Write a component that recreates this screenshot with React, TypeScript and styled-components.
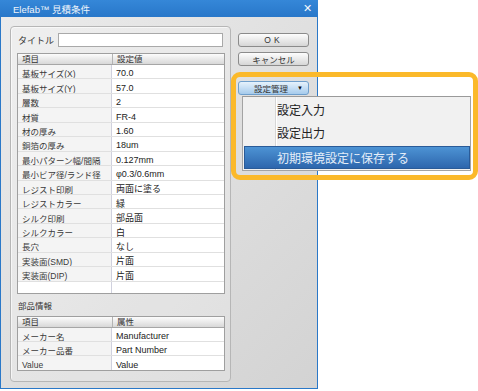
import styled, { createGlobalStyle } from "styled-components";

const FONT = `"Liberation Sans", "Noto Sans CJK JP", sans-serif`;

const GlobalStyle = createGlobalStyle`
  html, body {
    margin: 0;
    padding: 0;
    background: #ffffff;
  }
  body {
    font-family: ${FONT};
    color: #222;
  }
`;

const Stage = styled.div`
  position: relative;
  width: 478px;
  height: 391px;
  overflow: hidden;
`;

const Window = styled.div`
  width: 318px;
  height: 389px;
  box-sizing: border-box;
  border: 1px solid #2a78c8;
  border-top: none;
  display: flex;
  flex-direction: column;
`;

const TitleBar = styled.div`
  height: 17px;
  flex: none;
  margin: 0 -1px;
  background: linear-gradient(#3587d8, #2877c9);
  display: flex;
  align-items: center;
  justify-content: space-between;
  padding: 0 6px 0 13px;
  color: #eef4fb;
  font-size: 9.5px;
`;

const CloseMark = styled.span`
  font-size: 11px;
  line-height: 1;
  color: #f4f8fc;
`;

const Body = styled.div`
  flex: 1;
  display: flex;
  gap: 7px;
  padding: 9px 7px 6px 9px;
  background: linear-gradient(135deg, #ebebeb, #d3d3d3);
`;

const GroupBox = styled.div`
  width: 221px;
  box-sizing: border-box;
  border: 1px solid #b6b6b6;
  border-radius: 4px;
  background: rgba(255, 255, 255, 0.22);
  box-shadow: inset 1px 1px 0 rgba(255, 255, 255, 0.6);
  padding: 6px 7px 0 6px;
  display: flex;
  flex-direction: column;
`;

const TitleRow = styled.div`
  display: flex;
  align-items: center;
  height: 14px;
`;

const Label = styled.span`
  font-size: 9px;
  color: #333;
  padding-left: 1px;
  width: 40px;
`;

const TextInput = styled.div`
  flex: 1;
  height: 14px;
  box-sizing: border-box;
  background: #fff;
  border: 1px solid #a9a9a9;
`;

const Table = styled.div<{ top: number }>`
  margin-top: ${({ top }) => top}px;
  width: 206px;
  border: 1px solid #9f9f9f;
  background: #fff;
  font-size: 9px;
`;

const HeadRow = styled.div`
  display: grid;
  grid-template-columns: 94px 1fr;
  height: 10px;
  background: linear-gradient(#fcfcfc, #d8d8d8);
  border-bottom: 1px solid #a6a6a6;
  color: #333;
  font-size: 8.5px;
  line-height: 10px;
`;

const HeadCell = styled.div`
  padding-left: 4px;
  & + & {
    border-left: 1px solid #b4b4b4;
  }
`;

const Row = styled.div<{ h: number }>`
  display: grid;
  grid-template-columns: 94px 1fr;
  height: ${({ h }) => h}px;
  box-sizing: border-box;
  border-bottom: 1px solid #e0e0e0;
  &:last-child {
    border-bottom: none;
  }
`;

const Cell = styled.div<{ key0?: boolean }>`
  display: flex;
  align-items: center;
  padding: 3px 0 0 4px;
  white-space: nowrap;
  overflow: hidden;
  background: ${({ key0 }) => (key0 ? "#f4f4f4" : "#ffffff")};
  border-right: ${({ key0 }) => (key0 ? "1px solid #d0d1de" : "none")};
  color: ${({ key0 }) => (key0 ? "#3a3a3a" : "#222")};
  font-size: ${({ key0 }) => (key0 ? "8.5px" : "9px")};
`;

const SectionLabel = styled.div`
  margin-top: 7px;
  font-size: 8.5px;
  color: #333;
  padding-left: 1px;
  height: 10px;
  line-height: 10px;
`;

const SideColumn = styled.div`
  width: 71px;
  padding-top: 7px;
  display: flex;
  flex-direction: column;
  gap: 5px;
`;

const Button = styled.div<{ spaced?: boolean }>`
  height: 14px;
  box-sizing: border-box;
  border: 1px solid #8b8b8b;
  border-radius: 3px;
  background: linear-gradient(#fdfdfd, #d6d6d6);
  display: flex;
  align-items: center;
  justify-content: center;
  font-size: 8.5px;
  letter-spacing: ${({ spaced }) => (spaced ? "3px" : "0")};
  color: #333;
`;

const MenuButton = styled(Button)`
  margin-top: 10px;
  border-color: #6f9fcc;
  background: linear-gradient(#e6f2fc, #a6cbec);
  justify-content: flex-end;
  gap: 9px;
  padding-right: 5px;
`;

const Caret = styled.span`
  font-size: 6px;
  color: #111;
`;

const Menu = styled.div`
  position: absolute;
  left: 242px;
  top: 96px;
  width: 229px;
  box-sizing: border-box;
  border: 1px solid #a3a3a3;
  border-top-color: #9a9a9a;
  padding: 1px 0 1px;
  background: linear-gradient(
    to right,
    #f1f1f1 32px,
    #d6d6d6 32px,
    #d6d6d6 33px,
    #ffffff 33px,
    #ffffff 34px,
    #f1f1f1 34px
  );
  font-size: 12px;
`;

const MenuItem = styled.div<{ active?: boolean }>`
  height: 23px;
  box-sizing: border-box;
  display: flex;
  align-items: center;
  padding-left: ${({ active }) => (active ? "32px" : "34px")};
  margin: ${({ active }) => (active ? "2px 0 0 1px" : "0")};
  color: ${({ active }) => (active ? "#e4eef9" : "#222")};
  background: ${({ active }) =>
    active ? "linear-gradient(#4d93d4, #2d66ad)" : "transparent"};
  border: ${({ active }) => (active ? "1px solid #2a5b98" : "none")};
`;

const Highlight = styled.div`
  position: absolute;
  left: 231px;
  top: 72px;
  width: 247px;
  height: 108px;
  box-sizing: border-box;
  border: 5px solid #fbb92a;
  border-radius: 9px;
  pointer-events: none;
`;

const settings: [string, string][] = [
  ["基板サイズ(X)", "70.0"],
  ["基板サイズ(Y)", "57.0"],
  ["層数", "2"],
  ["材質", "FR-4"],
  ["材の厚み", "1.60"],
  ["銅箔の厚み", "18um"],
  ["最小パターン幅/間隔", "0.127mm"],
  ["最小ビア径/ランド径", "φ0.3/0.6mm"],
  ["レジスト印刷", "両面に塗る"],
  ["レジストカラー", "緑"],
  ["シルク印刷", "部品面"],
  ["シルクカラー", "白"],
  ["長穴", "なし"],
  ["実装面(SMD)", "片面"],
  ["実装面(DIP)", "片面"],
];

const parts: [string, string][] = [
  ["メーカー名", "Manufacturer"],
  ["メーカー品番", "Part Number"],
  ["Value", "Value"],
];

export default function App() {
  return (
    <Stage>
      <GlobalStyle />
      <Window>
        <TitleBar>
          <span>Elefab™ 見積条件</span>
          <CloseMark>✕</CloseMark>
        </TitleBar>
        <Body>
          <GroupBox>
            <TitleRow>
              <Label>タイトル</Label>
              <TextInput />
            </TitleRow>
            <Table top={6}>
              <HeadRow>
                <HeadCell>項目</HeadCell>
                <HeadCell>設定値</HeadCell>
              </HeadRow>
              {settings.map(([k, v]) => (
                <Row h={14.45} key={k}>
                  <Cell key0>{k}</Cell>
                  <Cell>{v}</Cell>
                </Row>
              ))}
              <Row h={11}>
                <Cell key0 style={{ background: "#fff" }} />
                <Cell />
              </Row>
            </Table>
            <SectionLabel>部品情報</SectionLabel>
            <Table top={5}>
              <HeadRow>
                <HeadCell>項目</HeadCell>
                <HeadCell>属性</HeadCell>
              </HeadRow>
              {parts.map(([k, v]) => (
                <Row h={14.3} key={k}>
                  <Cell key0>{k}</Cell>
                  <Cell>{v}</Cell>
                </Row>
              ))}
            </Table>
          </GroupBox>
          <SideColumn>
            <Button spaced>OK</Button>
            <Button>キャンセル</Button>
            <MenuButton>
              <span>設定管理</span>
              <Caret>▼</Caret>
            </MenuButton>
          </SideColumn>
        </Body>
      </Window>
      <Menu>
        <MenuItem>設定入力</MenuItem>
        <MenuItem>設定出力</MenuItem>
        <MenuItem active>初期環境設定に保存する</MenuItem>
      </Menu>
      <Highlight />
    </Stage>
  );
}
